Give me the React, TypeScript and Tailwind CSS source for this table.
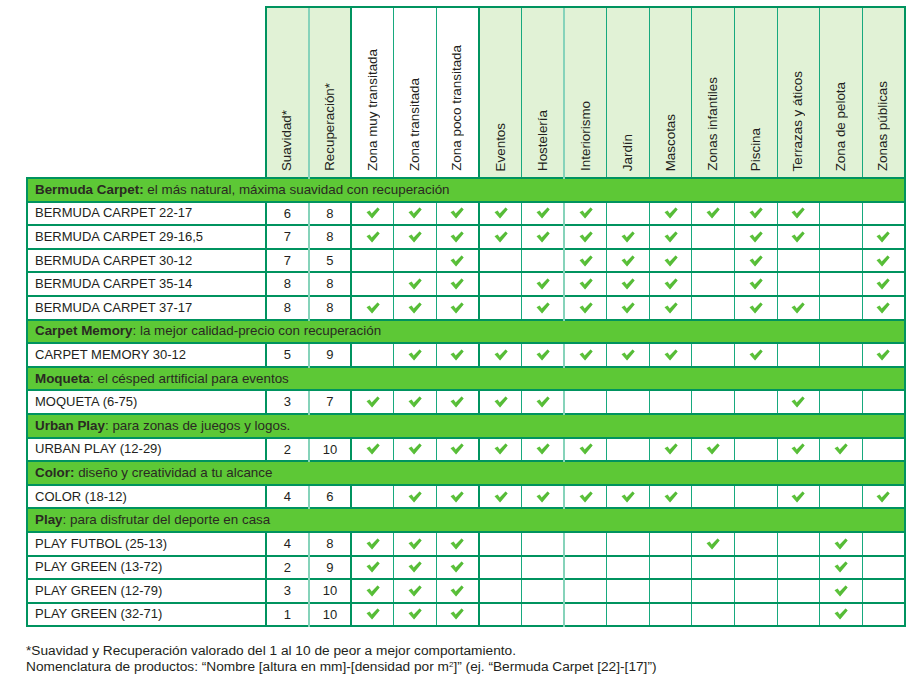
const columns = [
  "Suavidad*",
  "Recuperación*",
  "Zona muy transitada",
  "Zona transitada",
  "Zona poco transitada",
  "Eventos",
  "Hostelería",
  "Interiorismo",
  "Jardín",
  "Mascotas",
  "Zonas infantiles",
  "Piscina",
  "Terrazas y áticos",
  "Zona de pelota",
  "Zonas públicas",
]

type Product = { name: string; s: number; r: number; uses: number[] }
type Group = { title: string; subtitle: string; items: Product[] }

// uses = 1-based index of the 13 use columns that get a check
const groups: Group[] = [
  {
    title: "Bermuda Carpet:",
    subtitle: " el más natural, máxima suavidad con recuperación",
    items: [
      { name: "BERMUDA CARPET 22-17", s: 6, r: 8, uses: [1, 2, 3, 4, 5, 6, 8, 9, 10, 11] },
      { name: "BERMUDA CARPET 29-16,5", s: 7, r: 8, uses: [1, 2, 3, 4, 5, 6, 7, 8, 10, 11, 13] },
      { name: "BERMUDA CARPET 30-12", s: 7, r: 5, uses: [3, 6, 7, 8, 10, 13] },
      { name: "BERMUDA CARPET 35-14", s: 8, r: 8, uses: [2, 3, 5, 6, 7, 8, 10, 13] },
      { name: "BERMUDA CARPET 37-17", s: 8, r: 8, uses: [1, 2, 3, 5, 6, 7, 8, 10, 11, 13] },
    ],
  },
  {
    title: "Carpet Memory",
    subtitle: ": la mejor calidad-precio con recuperación",
    items: [{ name: "CARPET MEMORY 30-12", s: 5, r: 9, uses: [2, 3, 4, 5, 6, 7, 8, 10, 13] }],
  },
  {
    title: "Moqueta",
    subtitle: ": el césped arttificial para eventos",
    items: [{ name: "MOQUETA (6-75)", s: 3, r: 7, uses: [1, 2, 3, 4, 5, 11] }],
  },
  {
    title: "Urban Play",
    subtitle: ": para zonas de juegos y logos.",
    items: [{ name: "URBAN PLAY (12-29)", s: 2, r: 10, uses: [1, 2, 3, 4, 5, 6, 8, 9, 11, 12] }],
  },
  {
    title: "Color:",
    subtitle: " diseño y creatividad a tu alcance",
    items: [{ name: "COLOR (18-12)", s: 4, r: 6, uses: [2, 3, 4, 5, 6, 7, 8, 11, 13] }],
  },
  {
    title: "Play",
    subtitle: ": para disfrutar del deporte en casa",
    items: [
      { name: "PLAY FUTBOL (25-13)", s: 4, r: 8, uses: [1, 2, 3, 9, 12] },
      { name: "PLAY GREEN (13-72)", s: 2, r: 9, uses: [1, 2, 3, 12] },
      { name: "PLAY GREEN (12-79)", s: 3, r: 10, uses: [1, 2, 3, 12] },
      { name: "PLAY GREEN (32-71)", s: 1, r: 10, uses: [1, 2, 3, 12] },
    ],
  },
]

// left border per column (index in columns array)
const leftBorder = (i: number) => {
  if (i === 0 || i === 2 || i === 5) return "border-l-2 border-l-[#00935f]"
  if (i === 1 || i === 7) return "border-l-2 border-l-[#86d3ba]"
  return "border-l border-l-[#17a97e]"
}

function Check() {
  return (
    <svg width="14" height="12" viewBox="0 0 14 12" className="mx-auto block">
      <path d="M0.5 5.2 L3.6 3.6 L5.8 6.6 L11.6 0.6 L13.6 2.4 L6 11.4 Z" fill="#5cc23b" />
      <path d="M5.8 6.6 L11.6 0.6 L13.6 2.4 L6 11.4 Z" fill="#4fb534" opacity="0.5" />
    </svg>
  )
}

export default function App() {
  return (
    <div
      className="min-h-[685px] w-[916px] bg-white pl-[26px] pt-[6px] text-[#231f20]"
      style={{ fontFamily: '"Liberation Sans", Arial, sans-serif' }}
    >
      <table className="w-[878px] table-fixed border-collapse text-[13px]">
        <colgroup>
          <col className="w-[239px]" />
          {columns.map((c) => (
            <col key={c} className="w-[42.6px]" />
          ))}
        </colgroup>
        <thead>
          <tr className="h-[171px]">
            <th className="border-0 p-0"></th>
            {columns.map((c, i) => (
              <th
                key={c}
                className={`border-t-2 border-t-[#00935f] p-0 pb-[6px] align-bottom font-normal ${leftBorder(i)} ${
                  i >= 2 && i <= 4 ? "bg-white" : "bg-[#e1f2d6]"
                } ${i === 14 ? "border-r-2 border-r-[#00935f]" : ""}`}
              >
                <div className="flex justify-center">
                  <span className="rotate-180 whitespace-nowrap text-[13.4px] leading-[14px] [writing-mode:vertical-rl]">
                    {c}
                  </span>
                </div>
              </th>
            ))}
          </tr>
        </thead>
        <tbody>
          {groups.map((g) => (
            <GroupRows key={g.title} group={g} />
          ))}
        </tbody>
      </table>

      <div className="mt-[16px] text-[13.7px] leading-[16px]">
        <p>*Suavidad y Recuperación valorado del 1 al 10 de peor a mejor comportamiento.</p>
        <p>
          Nomenclatura de productos: “Nombre [altura en mm]-[densidad por m<sup className="text-[8px]">2</sup>]”
          (ej. “Bermuda Carpet [22]-[17]”)
        </p>
      </div>
    </div>
  )
}

function GroupRows({ group }: { group: Group }) {
  return (
    <>
      <tr className="h-[23.6px]">
        <td
          colSpan={16}
          className="border-2 border-[#00935f] bg-[#5dc836] px-[7px] py-0 text-[13.4px] leading-[20px] text-[#2a2a22]"
        >
          <span className="font-bold">{group.title}</span>
          {group.subtitle}
        </td>
      </tr>
      {group.items.map((p) => (
        <tr key={p.name} className="h-[23.6px] border-y-2 border-y-[#00935f]">
          <td className="border-l-2 border-l-[#00935f] px-[7px] py-0 leading-[20px]">{p.name}</td>
          <td className={`p-0 text-center ${leftBorder(0)}`}>{p.s}</td>
          <td className={`p-0 text-center ${leftBorder(1)}`}>{p.r}</td>
          {Array.from({ length: 13 }, (_, k) => (
            <td
              key={k}
              className={`p-0 ${leftBorder(k + 2)} ${k === 12 ? "border-r-2 border-r-[#00935f]" : ""}`}
            >
              {p.uses.includes(k + 1) ? <Check /> : null}
            </td>
          ))}
        </tr>
      ))}
    </>
  )
}
